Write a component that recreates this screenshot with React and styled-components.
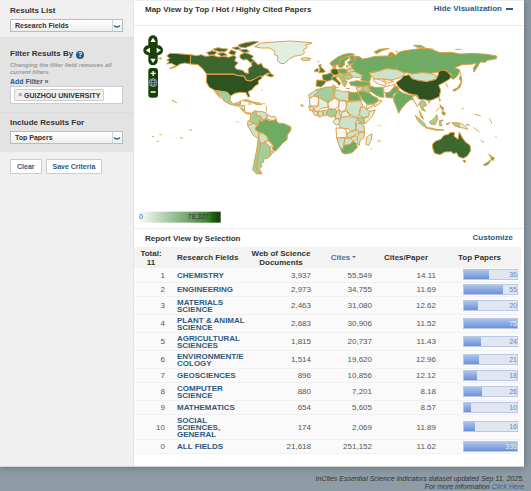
import styled, { createGlobalStyle } from 'styled-components';

const rows = [
  { rank: 1, field: 'CHEMISTRY', docs: '3,937', cites: '55,549', perPaper: '14.11', top: 36 },
  { rank: 2, field: 'ENGINEERING', docs: '2,973', cites: '34,755', perPaper: '11.69', top: 55 },
  { rank: 3, field: 'MATERIALS SCIENCE', docs: '2,463', cites: '31,080', perPaper: '12.62', top: 20 },
  { rank: 4, field: 'PLANT & ANIMAL SCIENCE', docs: '2,683', cites: '30,906', perPaper: '11.52', top: 75 },
  { rank: 5, field: 'AGRICULTURAL SCIENCES', docs: '1,815', cites: '20,737', perPaper: '11.43', top: 24 },
  { rank: 6, field: 'ENVIRONMENT/E\nCOLOGY', docs: '1,514', cites: '19,620', perPaper: '12.96', top: 21 },
  { rank: 7, field: 'GEOSCIENCES', docs: '896', cites: '10,856', perPaper: '12.12', top: 18 },
  { rank: 8, field: 'COMPUTER SCIENCE', docs: '880', cites: '7,201', perPaper: '8.18', top: 26 },
  { rank: 9, field: 'MATHEMATICS', docs: '654', cites: '5,605', perPaper: '8.57', top: 10 },
  { rank: 10, field: 'SOCIAL SCIENCES, GENERAL', docs: '174', cites: '2,069', perPaper: '11.89', top: 16 },
  { rank: 0, field: 'ALL FIELDS', docs: '21,618', cites: '251,152', perPaper: '11.62', top: 336 },
];

const MAX_TOP = 75;

// citation colour scale, from few to many
const C = {
  none: '#f7f8f5',
  min: '#e2efe0',
  low: '#cde2ca',
  mid: '#a3ce9c',
  high: '#6fab62',
  more: '#4b8239',
  top: '#3c682f',
  max: '#2f5221',
};

// every block has its own origin, paths are [fill, d]
const regions = [
  {
    origin: '402 0',
    shapes: [
      [C.max, 'M98 168 108 160 130 161 170 164 169 192 152 189 138 192 122 202 106 206 126 197 112 190 98 192 106 184 98 180 108 175Z'],
      [C.top, 'M170 164 188 167 202 164 214 169 238 166 252 171 270 169 284 172 300 166 306 172 302 182 312 188 302 200 308 208 326 211 334 219 344 220 342 206 354 198 352 186 362 184 372 194 382 190 388 202 402 208 410 219 398 220 388 228 376 230 362 237 348 243 336 240 332 229 310 226 298 222 218 222 206 206 192 194 169 192Z'],
      [C.max, 'M218 223 298 223 312 227 330 229 336 241 350 243 364 236 380 227 384 234 372 243 374 251 362 259 354 269 342 275 348 290 342 291 336 278 318 277 302 280 290 288 280 277 262 274 242 271 226 262 217 246Z'],
      [C.mid, 'M240 271 262 274 280 277 290 288 288 301 298 312 311 308 321 302 319 313 309 318 288 313 270 303 262 289 250 274 260 295 252 287Z'],
      [C.top, 'M218 158 234 152 248 156 242 164 226 165ZM236 148 252 143 266 146 282 147 276 154 256 155ZM250 160 270 158 280 166 262 169ZM284 158 292 150 306 155 302 165 290 163ZM294 143 312 140 320 147 306 149ZM312 135 334 128 362 124 374 126 352 136 334 143 318 141ZM316 150 338 148 346 155 330 158ZM318 165 332 158 348 163 358 169 352 176 362 182 350 188 338 178 328 180 318 174ZM396 225 410 220 420 228 410 231Z'],
      [C.min, 'M362 140 382 129 420 126 470 123 510 126 534 129 514 135 520 142 508 150 512 158 502 165 484 168 466 176 452 190 440 191 430 181 432 169 422 164 422 153 406 144 380 144Z'],
      [C.low, 'M502 175 514 173 530 175 528 180 512 182 503 180Z'],
      [C.mid, 'M74 175 84 174 80 178ZM114 301 120 303ZM122 304 128 308Z'],
    ],
  },
  {
    origin: '402 300',
    shapes: [
      [C.low, 'M305 13 317 15 332 17 331 30 322 27 316 20ZM322 28 332 31 338 38 350 39 346 43 334 40Z'],
      [C.mid, 'M324 1 340-1 354 5 364 8 350 8 338 4ZM356 8 372 8 384 13 368 14ZM386 11 394 12M396 17 398 34M342 12 352 12'],
      [C.mid, 'M350 42 362 32 370 34 366 46 382 50 380 64 374 76 358 69 348 64Z'],
      [C.low, 'M366 34 380 34 396 38 402 46 396 56 384 61 382 50 368 46Z'],
      [C.min, 'M400 44 412 50 424 50 428 60 418 65 408 60 398 57Z'],
      [C.low, 'M342 62 352 65 356 70 346 78 340 75Z'],
      [C.low, 'M341 77 357 70 372 76 364 86 374 96 374 116 358 106 350 92Z'],
      [C.high, 'M374 76 376 61 384 64 396 57 406 63 426 59 432 69 450 71 470 80 471 90 460 105 459 119 445 130 438 139 424 154 414 147 418 137 404 123 400 109 388 101 376 96 364 90 366 80Z'],
      [C.low, 'M375 97 388 101 399 110 402 120 392 125 382 132 375 117Z'],
      [C.min, 'M394 124 404 122 416 135 410 143 396 131Z'],
      [C.mid, 'M380 132 392 126 396 132 410 143 408 156 412 166 402 174 388 178 390 186 380 190 384 198 376 208 384 220 368 212 368 184 372 158Z'],
      [C.low, 'M408 150 420 156 410 162Z'],
      [C.mid, 'M373 114 380 132 374 158 369 184 365 198 370 214 384 221 368 222 356 210 360 188 367 156Z'],
      [C.mid, 'M166 89 174 91M76 103 82 104M54 109 60 110M68 124 74 124M138 112 147 115M308 65 313 66M498 15 508 20'],
    ],
  },
  {
    origin: '720 105',
    shapes: [
      [C.more, 'M236 90 244 89 242 96 250 102 256 110 246 113 236 113 240 104ZM225 104 234 100 235 109 224 111Z'],
      [C.high, 'M270 84 280 76 294 66 312 58 330 55 344 58 330 62 318 66 302 73 296 86 286 92 274 92Z'],
      [C.high, 'M296 86 302 73 320 64 328 69 314 78 314 90 304 98 294 95Z'],
      [C.high, 'M328 64 336 60 344 64 344 76 346 84 328 89 322 82 332 75Z'],
      [C.mid, 'M278 95 288 94 286 101 278 101Z'],
      [C.more, 'M246 120 260 118 272 113 280 121 276 134 262 139 250 136Z'],
      [C.top, 'M272 105 282 101 294 103 296 116 288 121 276 118Z'],
      [C.more, 'M230 135 258 137 254 147 242 156 228 153Z'],
      [C.more, 'M274 128 288 124 290 132 302 144 298 152 290 142 278 134Z'],
      [C.high, 'M294 103 312 101 322 106 318 117 296 114Z'],
      [C.low, 'M318 92 334 88 338 100 324 104ZM324 104 338 100 348 108 320 114Z'],
      [C.mid, 'M288 120 312 116 308 127 290 125ZM312 118 330 117 338 128 324 134 310 127ZM298 128 314 130 318 139 304 138Z'],
      [C.low, 'M320 113 344 109 370 116 368 125 354 128 340 126 332 117Z'],
      [C.mid, 'M306 140 322 138 320 144 314 156 308 148ZM318 160 330 161M278 147 281 153M288 157 296 158'],
      [C.high, 'M328 142 350 137 372 140 390 142 390 150 370 154 350 154 332 151Z'],
      [C.none, 'M232 80 238 80M202 72 206 70M64 166 68 166M184 208 188 214'],
    ],
  },
  {
    origin: '900 240',
    shapes: [
      [C.low, 'M26 44 42 34 50 29 54 38 40 48 28 56Z'],
      [C.mid, 'M50 29 76 22 98 20 102 42 104 52 82 67 70 62 42 46 54 38Z'],
      [C.mid, 'M98 18 106 18 108 28 103 34Z'],
      [C.low, 'M104 30 120 31 128 36 146 34 146 66 136 62 120 60 104 52Z'],
      [C.high, 'M146 35 162 38 174 36 178 46 184 62 146 62Z'],
      [C.none, 'M28 56 40 48 56 52 54 78 30 78Z'],
      [C.min, 'M56 52 84 68 84 82 64 84 52 96 40 86 56 78Z'],
      [C.none, 'M84 68 104 55 118 62 116 80 104 88 86 86Z'],
      [C.none, 'M118 62 138 64 140 82 136 90 124 96 116 86Z'],
      [C.low, 'M140 66 182 62 188 76 178 90 182 104 166 112 150 104 138 88Z'],
      [C.low, 'M26 78 40 80 42 90 30 92ZM36 92 52 94 54 108 44 106ZM54 96 66 92 70 106 58 112ZM68 92 78 90 80 106 72 108Z'],
      [C.mid, 'M82 88 104 88 112 92 108 106 94 112 82 106Z'],
      [C.low, 'M112 92 118 88 120 102 126 116 108 118 106 108Z'],
      [C.min, 'M124 98 138 92 150 106 140 112 124 112Z'],
      [C.low, 'M182 82 192 80 206 92 216 96 206 110 190 112 178 106Z'],
      [C.min, 'M208 95 226 90 216 110 194 132 192 114 206 110Z'],
      [C.mid, 'M172 112 190 112 192 132 178 128 172 122Z'],
      [C.min, 'M104 118 116 116 120 130 108 136 100 126Z'],
      [C.low, 'M124 112 142 110 164 112 172 118 166 132 168 148 152 154 146 146 122 144 116 132Z'],
      [C.low, 'M168 130 180 130 192 138 194 154 178 156 168 146Z'],
      [C.none, 'M108 144 126 144 138 148 140 172 110 174Z'],
      [C.low, 'M142 158 156 154 170 150 178 158 164 166 150 174 140 170Z'],
      [C.low, 'M178 158 194 156 192 172 180 182 178 196 172 190 172 172Z'],
      [C.low, 'M152 174 168 166 174 176 164 184 154 182Z'],
      [C.low, 'M110 174 136 174 132 190 130 206 120 204Z'],
      [C.low, 'M134 176 150 174 160 184 146 196 132 196Z'],
      [C.high, 'M122 206 130 206 132 196 148 194 160 184 170 190 172 202 156 218 136 222 126 218Z'],
      [C.min, 'M200 172 210 164 216 162 214 178 206 196 198 194Z'],
      [C.mid, 'M6 74 11 76M212 206 216 208M232 136 234 138M104 108 106 116'],
    ],
  },
  {
    origin: '990 0',
    shapes: [
      [C.high, 'M76 168 88 170 98 177 116 174 134 169 160 168 182 168 186 156 196 166 208 156 224 152 254 148 284 144 308 149 330 158 364 157 392 162 430 160 470 163 500 168 499 176 472 181 466 187 450 186 444 198 432 216 430 204 440 190 428 192 396 194 374 203 390 210 384 226 370 238 360 232 366 226 350 212 326 216 300 220 276 218 254 221 238 220 216 216 200 208 168 206 146 214 118 218 124 230 118 246 92 240 98 226 76 216 62 198 72 188Z'],
      [C.low, 'M118 220 146 214 168 206 200 209 226 220 212 232 194 238 180 240 158 236 138 238 128 232Z'],
      [C.low, 'M244 222 276 218 300 220 318 226 322 236 290 245 256 240 240 230Z'],
      [C.none, 'M128 237 150 238 168 250 164 258 146 252 136 248ZM158 238 178 240 192 244 174 250Z'],
      [C.max, 'M198 248 214 236 220 228 236 224 246 236 264 241 290 245 318 238 324 226 326 214 336 210 350 213 364 228 358 238 340 248 326 256 332 270 328 290 308 299 296 302 280 298 268 300 262 286 240 282 222 274 206 262Z'],
      [C.none, 'M160 262 182 256 196 252 190 264 178 278 162 278Z'],
      [C.high, 'M166 280 180 276 194 258 206 262 206 272 190 284 188 294 168 292Z'],
      [C.high, 'M190 292 206 270 216 278 240 286 262 286 254 298 240 300 230 308 214 326 206 340 198 318 192 304Z'],
      [C.high, 'M116 256 134 262 158 262 160 278 162 292 146 290 130 280 120 272Z'],
      [C.mid, 'M98 260 114 258 122 276 110 276 94 268Z'],
      [C.low, 'M78 262 98 260 94 270 84 276Z'],
      [C.high, 'M84 278 94 272 120 280 128 288 142 294 146 302 128 312 110 312 100 302Z'],
      [C.min, 'M110 314 128 312 130 318 114 326 108 328ZM132 312 146 302 156 302 150 310 134 320Z'],
      [C.none, 'M246 290 258 286 264 296 276 300 268 310 262 320 254 306Z'],
      [C.mid, 'M276 300 286 306 290 316 278 322 286 334 276 330 268 312Z'],
      [C.high, 'M368 270 382 264 394 246 388 236 392 224 396 242 390 262 374 274ZM388 210 392 222M348 254 354 262M326 292 332 302 328 304M346 250 352 256'],
      [C.high, 'M132 156 148 148 178 145 156 152 140 161ZM174 166 180 157 190 160 182 170ZM250 136 272 136 284 142 262 142ZM276 145 310 147M376 148 394 148M196 152 204 156'],
      [C.mid, 'M332 318 340 322 342 330M396 326 400 326'],
    ],
  },
  {
    origin: '990 300',
    shapes: [
      [C.mid, 'M256 46 270 58 282 68 290 82 276 76 262 60ZM268 32 276 46 280 58 272 50ZM286 83 304 84 318 88 342 90 318 91ZM298 66 312 56 320 44 324 54 316 74 302 72ZM328 62 340 60 332 68 336 78 328 76ZM348 72 360 68 354 74Z'],
      [C.high, 'M330 14 336 22 340 32 332 24ZM336 34 346 38 344 46 336 42ZM318 34 328 22M294 0 300 4 296 10'],
      [C.mid, 'M366 68 384 68 388 82 374 78Z'],
      [C.min, 'M388 68 402 76 414 88 400 84 388 82Z'],
      [C.low, 'M406 76 414 72 418 78M430 82 440 90 448 96M452 120 462 128M496 110 500 112M396 26 400 24M434 42 452 48M478 56 486 70M148 76 152 78M142 124 152 122'],
      [C.top, 'M308 132 316 124 332 118 342 106 356 103 360 97 374 98 372 108 384 118 388 96 396 112 406 126 420 136 422 152 412 168 400 175 386 170 380 158 370 161 364 155 344 156 330 164 314 160 308 144Z'],
      [C.max, 'M399 182 407 182 404 188Z'],
      [C.high, 'M476 162 486 170 494 174 488 182 482 178 484 174ZM460 194 470 188 482 180 476 192 466 197Z'],
    ],
  },
];

const WorldMap = () => (
  <StMap viewBox='402 78 1170 606' role='img' aria-label='World map of citations'>
    <defs>
      <linearGradient id='scale' x1='0' x2='1'>
        <stop offset='0' stopColor='#fff' />
        <stop offset='0.85' stopColor='#3a8030' />
        <stop offset='0.9' stopColor='#226012' />
        <stop offset='1' stopColor='#143c08' />
      </linearGradient>
    </defs>
    {regions.map((region) => (
      <g key={region.origin} transform={`translate(${region.origin})`} stroke='#dfa047' strokeWidth='3' strokeLinejoin='round'>
        {region.shapes.map(([fill, d]) => (
          <path key={d} fill={fill} d={d} />
        ))}
      </g>
    ))}
    <g transform='translate(402 0)'>
      <g fill='#174007'>
        <rect x='43' y='106' width='28' height='90' rx='14' />
        <rect x='28' y='136' width='59' height='30' rx='15' />
        <rect x='43' y='204' width='29' height='89' rx='9' />
      </g>
      <path fill='#fff' d='M57 113 65 126H49ZM57 189 65 176H49ZM35 151 48 143V159ZM81 151 68 143V159Z' />
      <path stroke='#fff' strokeWidth='4' d='M50 220H65M57.500 213V228M50 276H65' />
      <g fill='none' stroke='#8fa0c4' strokeWidth='2.500'>
        <circle cx='57' cy='248' r='12' />
        <ellipse cx='57' cy='248' rx='5' ry='12' />
        <path d='M45 248H69M48 241H66M48 255H66' />
      </g>
      <rect x='12' y='635' width='248' height='33' fill='url(#scale)' />
    </g>
  </StMap>
);

const App = () => {
  return (
    <>
      <GlobalStyle />
      <StPage>
        <StPanel>
          <StSidebar>
            <StFilterBlock>
              <StLabel htmlFor='list'>Results List</StLabel>
              <Select id='list' value='Research Fields' />
            </StFilterBlock>
            <StFilterBlock $dark $spacious>
              <StLabelRow>
                <StLabel htmlFor='filter'>Filter Results By</StLabel>
                <StHelp type='button' aria-label='Help'>?</StHelp>
              </StLabelRow>
              <StHint>Changing the filter field removes all current filters.</StHint>
              <StLink href='#filter' $small>Add Filter »</StLink>
              <StTagBox>
                <StTag>
                  <StRemove type='button' aria-label='Remove filter'>×</StRemove>
                  GUIZHOU UNIVERSITY
                </StTag>
                <StTagInput id='filter' type='text' />
              </StTagBox>
            </StFilterBlock>
            <StFilterBlock $dark $last>
              <StLabel htmlFor='include'>Include Results For</StLabel>
              <Select id='include' value='Top Papers' />
            </StFilterBlock>
            <StActions>
              <StButton type='button'>Clear</StButton>
              <StButton type='button'>Save Criteria</StButton>
            </StActions>
          </StSidebar>

          <StMain>
            <StBar>
              <StTitle>Map View by Top / Hot / Highly Cited Papers</StTitle>
              <StLink href='#map'>
                Hide Visualization <StMinus />
              </StLink>
            </StBar>
            <StMapArea id='map'>
              <WorldMap />
              <StScaleText>
                <span>0</span>
                <span>78,327</span>
              </StScaleText>
            </StMapArea>
            <StBar $short>
              <StTitle>Report View by Selection</StTitle>
              <StLink href='#report'>Customize</StLink>
            </StBar>
            <StTable id='report'>
              <colgroup>
                <col width='38' />
                <col width='77' />
                <col width='64' />
                <col width='61' />
                <col width='64' />
                <col />
              </colgroup>
              <thead>
                <tr>
                  <th>Total: 11</th>
                  <StFieldHead>Research Fields</StFieldHead>
                  <th>Web of Science Documents</th>
                  <th><StSort href='#cites'>Cites</StSort></th>
                  <th>Cites/Paper</th>
                  <StTopHead>Top Papers</StTopHead>
                </tr>
              </thead>
              <tbody>
                {rows.map((row) => (
                  <tr key={row.rank}>
                    <td>{row.rank}</td>
                    <StField><a href='#field'>{row.field}</a></StField>
                    <td>{row.docs}</td>
                    <td>{row.cites}</td>
                    <td>{row.perPaper}</td>
                    <StTopCell>
                      <StTrack $full={row.top >= MAX_TOP}>
                        <StFill style={{ width: `${Math.min(100, (row.top / MAX_TOP) * 100)}%` }} />
                        <StCount>{row.top}</StCount>
                      </StTrack>
                    </StTopCell>
                  </tr>
                ))}
              </tbody>
            </StTable>
          </StMain>
        </StPanel>
        <StFooter>
          InCites Essential Science Indicators dataset updated Sep 11, 2025.
          <br />
          For more information <a href='#info'>Click Here</a>
        </StFooter>
      </StPage>
    </>
  );
};

export default App;

const Select = ({ id, value }) => (
  <StSelectWrap>
    <StSelect id={id} defaultValue={value}>
      <option>{value}</option>
    </StSelect>
    <StArrow viewBox='0 0 10 12' aria-hidden='true'>
      <path d='M0.500 0V12' stroke='#c9d3da' />
      <path d='M2 6Q5 9 8 6' fill='none' stroke='#2f6288' strokeWidth='1.500' />
    </StArrow>
  </StSelectWrap>
);

const GlobalStyle = createGlobalStyle`
  * {
    box-sizing: border-box;
  }
  body {
    margin: 0;
    background: #8f9ca5;
    font-family: 'Liberation Sans', Arial, sans-serif;
    font-size: 8px;
    color: #333;
  }
  button, select, input {
    font-family: inherit;
    font-size: 7px;
  }
  a {
    text-decoration: none;
  }
`;

const StPage = styled.div`
  padding-right: 7px;
`;

const StPanel = styled.div`
  display: flex;
  background: #fff;
  border-top: 1px solid #eee;
  border-bottom: 1px solid #d5d9db;
  box-shadow: 0 0 8px rgba(50, 60, 66, 0.5);
`;

const StSidebar = styled.aside`
  flex: none;
  width: 134px;
  background: #f0f0f0;
  border-right: 1px solid #e4e4e4;
`;

const StFilterBlock = styled.section`
  display: flex;
  flex-direction: column;
  align-items: flex-start;
  padding: ${({ $spacious }) => ($spacious ? '10px 10px 8px' : '4px 10px 5px')};
  ${({ $last }) => ($last ? 'padding-bottom: 8px;' : '')}
  background: ${({ $dark }) => ($dark ? '#e3e3e3' : 'transparent')};

  & + & {
    border-top: 1px solid #dcdcdc;
  }
`;

const StLabelRow = styled.div`
  display: flex;
  align-items: center;
  gap: 3px;
`;

const StLabel = styled.label`
  height: 12px;
  margin-bottom: 2px;
  font-weight: bold;
  line-height: 12px;
`;

const StHelp = styled.button`
  width: 8px;
  height: 8px;
  padding: 0;
  border: none;
  border-radius: 50%;
  background: #235a87;
  color: #fff;
  line-height: 8px;
  font-weight: bold;
`;

const StHint = styled.p`
  margin: 0 0 2px;
  color: #999;
  font-size: 6px;
  font-style: italic;
  font-weight: bold;
  line-height: 7px;
`;

const StLink = styled.a`
  display: flex;
  align-items: center;
  gap: 4px;
  color: #2b5b84;
  font-size: ${({ $small }) => ($small ? '7px' : '8px')};
  font-weight: bold;
  line-height: 8px;
`;

const StTagBox = styled.div`
  display: flex;
  width: 100%;
  height: 18px;
  padding: 2px 3px;
  border: 1px solid #ccc;
  background: #fff;
`;

const StTag = styled.span`
  display: flex;
  align-items: center;
  gap: 2px;
  height: 12px;
  padding: 0 3px;
  border: 1px solid #ccc;
  border-radius: 2px;
  background: #f0f0f0;
  font-size: 7px;
  font-weight: bold;
  white-space: nowrap;
`;

const StTagInput = styled.input`
  flex: 1;
  min-width: 0;
  padding: 0;
  border: none;
  background: none;
`;

const StRemove = styled.button`
  padding: 0;
  border: none;
  background: none;
  color: #888;
  line-height: 8px;
  font-weight: bold;
`;

const StSelectWrap = styled.div`
  position: relative;
  width: 100%;
`;

const StSelect = styled.select`
  display: block;
  appearance: none;
  width: 100%;
  height: 13px;
  padding: 0 4px;
  border: 1px solid #bbb;
  border-radius: 0;
  background: linear-gradient(#fff, #eee);
  color: #333;
  font-weight: bold;
`;

const StArrow = styled.svg`
  position: absolute;
  top: 0;
  right: 1px;
  width: 10px;
  height: 13px;
  pointer-events: none;
`;

const StActions = styled.div`
  display: flex;
  gap: 4px;
  padding: 7px 10px;
`;

const StButton = styled.button`
  height: 15px;
  padding: 0 6px;
  border: 1px solid #ccc;
  border-radius: 1px;
  background: #fff;
  color: #2b5b84;
  font-weight: bold;
`;

const StMain = styled.main`
  flex: 1;
  min-width: 0;
  padding-bottom: 12px;
`;

const StBar = styled.div`
  display: flex;
  justify-content: space-between;
  align-items: center;
  height: ${({ $short }) => ($short ? '19px' : '25px')};
  padding: 0 11px;
  ${({ $short }) => ($short ? '' : 'padding-bottom: 8px;')}
  border-${({ $short }) => ($short ? 'top' : 'bottom')}: 1px solid #eee;
`;

const StTitle = styled.h2`
  margin: 0;
  font-size: 8px;
`;

const StMinus = styled.span`
  width: 7px;
  height: 2px;
  background: #2b5b84;
`;

const StMapArea = styled.div`
  position: relative;
`;

const StMap = styled.svg`
  display: block;
  width: 100%;
`;

// numbers printed over the colour scale
const StScaleText = styled.div`
  position: absolute;
  bottom: 8px;
  left: 5px;
  display: flex;
  justify-content: space-between;
  width: 70px;
  font-size: 7px;

  span:first-child {
    color: #2b5b84;
  }
`;

const StTable = styled.table`
  width: calc(100% - 3px);
  table-layout: fixed;
  border-collapse: collapse;
  background: #fafafa;

  th {
    height: 21px;
    padding: 0 2px;
    background: #f3f3f3;
    line-height: 9px;
  }
  th:first-child {
    padding: 0 8px 0 4px;
  }
  td {
    height: 14px;
    padding: 2px 2px 1px 0;
    border-bottom: 1px solid #f1f1f1;
    color: #555;
    line-height: 7px;
    text-align: right;
  }
  td:first-child {
    padding-right: 7px;
  }
`;

const StFieldHead = styled.th`
  && {
    padding-left: 5px;
  }
  text-align: left;
  white-space: nowrap;
`;

const StTopHead = styled.th`
  text-align: center;
`;

const StSort = styled.a`
  color: #4a6f9d;

  &::after {
    content: '';
    display: inline-block;
    margin-left: 2px;
    vertical-align: 2px;
    border: 2px solid transparent;
    border-top-color: #4a6f9d;
    border-bottom: none;
  }
`;

const StField = styled.td`
  && {
    padding-left: 5px;
    text-align: left;
  }
  a {
    color: #2b5b84;
    font-weight: bold;
    white-space: pre-line;
  }
`;

const StTopCell = styled.td`
  && {
    padding: 1px 3px 1px 25px;
  }
`;

const StTrack = styled.div`
  position: relative;
  height: 11px;
  overflow: hidden;
  border: 1px solid #b9c9e6;
  background: #e0e7f2;
  color: ${({ $full }) => ($full ? '#e8eefa' : '#7484a8')};
  font-size: 7px;
  line-height: 9px;
`;

const StFill = styled.div`
  height: 100%;
  background: linear-gradient(#aec3ea, #6b92d8);
`;

const StCount = styled.span`
  position: absolute;
  top: 0;
  right: 0;
`;

const StFooter = styled.footer`
  padding-top: 8px;
  font-size: 7px;
  font-style: italic;
  line-height: 8px;
  text-align: right;

  a {
    color: #2f6594;
  }
`;
